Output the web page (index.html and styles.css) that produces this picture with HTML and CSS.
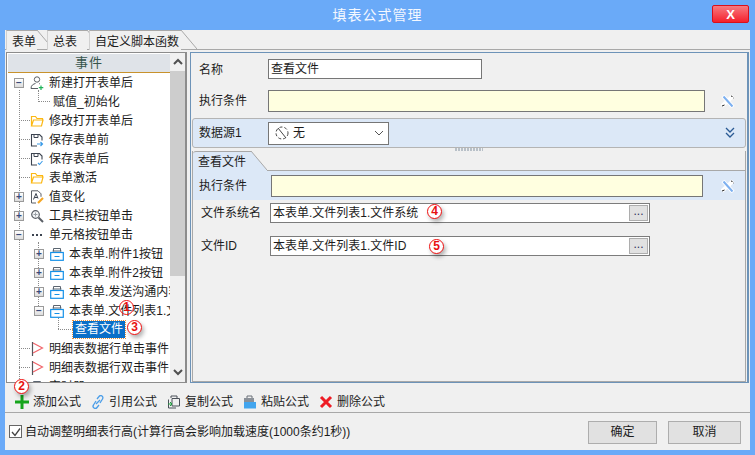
FILE: index.html
```html
<!DOCTYPE html>
<html lang="zh">
<head>
<meta charset="utf-8">
<title>填表公式管理</title>
<link rel="stylesheet" href="styles.css">
</head>
<body>
<svg class="defs" width="0" height="0">
  <symbol id="i-user" viewBox="0 0 14 14"><circle cx="7" cy="3.5" r="2.7" fill="none" stroke="#5a5f66"/><path d="M1 12.5c0-3.5 2.5-4.5 4.5-5M9 7.5l.8.4M1 12.5h7" fill="none" stroke="#5a5f66"/><path d="M11 9.5v4.500M8.800 11.700h4.500" stroke="#1fb35a" stroke-width="1.200"/></symbol>
  <symbol id="i-folder" viewBox="0 0 14 14"><path d="M1.500 12V2.500h4l1.500 2h5.500V6M1.500 12h10L13 6H3.500L1.500 12z" fill="none" stroke="#fcb813" stroke-width="1.200"/></symbol>
  <symbol id="i-save" viewBox="0 0 14 14"><path d="M7 13H1.500V1.500h8l2.500 2.500v3.500" fill="none" stroke="#3c4450" stroke-width="1.100"/><path d="M4 1.500v3h4v-3" fill="none" stroke="#3c4450"/><path d="M7 11h5M10.500 9l2 2-2 2" fill="none" stroke="#3a9be8" stroke-width="1.200"/></symbol>
  <symbol id="i-savec" viewBox="0 0 14 14"><path d="M7 13H1.500V1.500h8l2.500 2.500v3.500" fill="none" stroke="#3c4450" stroke-width="1.100"/><path d="M4 1.500v3h4v-3" fill="none" stroke="#3c4450"/><path d="M8 11l1.500 1.500 3-3.500" fill="none" stroke="#3a9be8" stroke-width="1.100"/></symbol>
  <symbol id="i-doc" viewBox="0 0 14 14"><path d="M6 13H1.500V.8h6.500l3 3v3" fill="none" stroke="#5a5f66"/><path d="M3.500 9.500L6 3.500l2 5M4.500 7.500h3" fill="none" stroke="#3c4450"/><path d="M8 13l5-5" stroke="#f5a623" stroke-width="2.200"/></symbol>
  <symbol id="i-search" viewBox="0 0 14 14"><circle cx="5.500" cy="5.500" r="3.800" fill="#f4f6f8" stroke="#5a5f66" stroke-width="1.200"/><path d="M3.500 5.500h4M5.500 3.500v4" stroke="#9aa0a6"/><path d="M8.500 8.500l4.500 4.500" stroke="#5a5f66" stroke-width="2"/></symbol>
  <symbol id="i-dots" viewBox="0 0 14 14"><path d="M2 7h2M6 7h2M10 7h2" stroke="#3c4450" stroke-width="2"/></symbol>
  <symbol id="i-tray" viewBox="0 0 14 14"><path d="M3.500 4.500V1.500h7v3" fill="none" stroke="#5b6570"/><path d="M2.500 4h9" stroke="#5b6570"/><rect x=".7" y="5.500" width="12.600" height="7.800" fill="none" stroke="#1591e8" stroke-width="1.200"/><path d="M4.500 9.500h5" stroke="#1591e8"/></symbol>
  <symbol id="i-flag" viewBox="0 0 14 14"><path d="M2.500 0v14" stroke="#53565c" stroke-width="1.200"/><path d="M3 1l9.500 5L3 11" fill="none" stroke="#f0646a" stroke-width="1.200"/></symbol>
  <symbol id="i-wand" viewBox="0 0 14 14"><path d="M1 12L12 2" stroke="#fff" stroke-width="4"/><path d="M2 2l10 11" stroke="#fff" stroke-width="4"/><path d="M2.500 2.500l9 10" stroke="#7db0f0" stroke-width="2"/><path d="M1 12l2.500-1M10 2l1.500 .5M12.500 4h.5" stroke="#222" stroke-width="1"/></symbol>
</svg>

<div class="window">
  <header class="titlebar">
    <span class="title">填表公式管理</span>
    <button class="close">X</button>
  </header>

  <div class="content">
    <nav class="tabs">
      <div class="tab t1"><span class="tab-text">表单</span><svg class="slant" width="16" height="20"><path d="M0 0l16 19" fill="none" stroke="#a8a8a8"/></svg></div>
      <div class="tab t2"><span class="tab-text">总表</span><svg class="slant" width="16" height="20"><path d="M0 0l16 19" fill="none" stroke="#a8a8a8"/></svg></div>
      <div class="tab t3"><span class="tab-text">自定义脚本函数</span><svg class="slant" width="16" height="20"><path d="M0 0l16 19" fill="none" stroke="#a8a8a8"/></svg></div>
    </nav>

    <main class="main">
      <section class="left">
        <div class="tree">
          <div class="tree-head">事件</div>
          <span class="vline v1"></span>
          <span class="vline v2"></span>
          <span class="vline v3"></span>
          <span class="vline v4"></span>
          <div class="row l1"><span class="exp">−</span><svg class="ic"><use href="#i-user"/></svg><span>新建打开表单后</span></div>
          <div class="row l2leaf"><span class="conn"></span><span>赋值_初始化</span></div>
          <div class="row l1"><span class="conn"></span><svg class="ic"><use href="#i-folder"/></svg><span>修改打开表单后</span></div>
          <div class="row l1"><span class="conn"></span><svg class="ic"><use href="#i-save"/></svg><span>保存表单前</span></div>
          <div class="row l1"><span class="conn"></span><svg class="ic"><use href="#i-savec"/></svg><span>保存表单后</span></div>
          <div class="row l1"><span class="conn"></span><svg class="ic"><use href="#i-folder"/></svg><span>表单激活</span></div>
          <div class="row l1"><span class="exp">+</span><svg class="ic"><use href="#i-doc"/></svg><span>值变化</span></div>
          <div class="row l1"><span class="exp">+</span><svg class="ic"><use href="#i-search"/></svg><span>工具栏按钮单击</span></div>
          <div class="row l1"><span class="exp">−</span><svg class="ic"><use href="#i-dots"/></svg><span>单元格按钮单击</span></div>
          <div class="row l2"><span class="exp">+</span><svg class="ic"><use href="#i-tray"/></svg><span>本表单.附件1按钮</span></div>
          <div class="row l2"><span class="exp">+</span><svg class="ic"><use href="#i-tray"/></svg><span>本表单.附件2按钮</span></div>
          <div class="row l2"><span class="exp">+</span><svg class="ic"><use href="#i-tray"/></svg><span>本表单.发送沟通内容按钮</span></div>
          <div class="row l2"><span class="exp">−</span><svg class="ic"><use href="#i-tray"/></svg><span>本表单.文件列表1.文件按钮</span></div>
          <div class="row l3"><span class="conn"></span><span class="selected">查看文件</span></div>
          <div class="row l1"><span class="conn"></span><svg class="ic"><use href="#i-flag"/></svg><span>明细表数据行单击事件</span></div>
          <div class="row l1"><span class="conn"></span><svg class="ic"><use href="#i-flag"/></svg><span>明细表数据行双击事件</span></div>
          <div class="row l1"><span class="conn"></span><svg class="ic"><use href="#i-tray"/></svg><span>定时器</span></div>
        </div>
        <div class="scrollbar">
          <svg class="sb-arrow" width="16" height="18"><path d="M4 11l4-4 4 4" fill="none" stroke="#505050" stroke-width="2"/></svg>
          <div class="sb-thumb"></div>
          <svg class="sb-arrow sb-end" width="16" height="18"><path d="M4 7l4 4 4-4" fill="none" stroke="#505050" stroke-width="2"/></svg>
        </div>
      </section>

      <section class="right">
        <div class="form-row first">
          <span class="lbl">名称</span>
          <div class="field name-field">查看文件</div>
        </div>
        <div class="form-row second">
          <span class="lbl">执行条件</span>
          <div class="field yellow cond-field"></div>
          <svg class="wand"><use href="#i-wand"/></svg>
        </div>
        <div class="band">
          <span class="lbl">数据源1</span>
          <div class="select">
            <svg class="no-ic" width="16" height="16"><circle cx="8" cy="8" r="6" fill="none" stroke="#444" stroke-dasharray="3 2"/><path d="M4 3l8 10" stroke="#444"/></svg>
            <span>无</span>
            <svg class="caret" width="10" height="6"><path d="M1 1l4 4 4-4" fill="none" stroke="#555"/></svg>
          </div>
          <svg class="chev" width="12" height="14"><path d="M2 2l4 4 4-4M2 7l4 4 4-4" fill="none" stroke="#2a5a94" stroke-width="1.300"/></svg>
        </div>
        <div class="handle"></div>
        <div class="sub">
          <div class="sub-tabs">
            <div class="sub-tab">查看文件</div>
            <svg class="sub-slant" width="16" height="20"><path d="M0 0L16 19V20H0z" fill="#dce8f7"/><path d="M0 0l16 19" fill="none" stroke="#a8a8a8"/></svg>
            <div class="sub-line"></div>
          </div>
          <div class="sub-band">
            <span class="lbl lbl-wide">执行条件</span>
            <div class="field yellow sub-cond"></div>
            <svg class="wand wand-sub"><use href="#i-wand"/></svg>
          </div>
          <div class="file-row top">
            <span class="lbl">文件系统名</span>
            <div class="field file-field"><span class="file-text">本表单.文件列表1.文件系统</span><span class="more">...</span></div>
          </div>
          <div class="file-row next">
            <span class="lbl">文件ID</span>
            <div class="field file-field"><span class="file-text">本表单.文件列表1.文件ID</span><span class="more">...</span></div>
          </div>
        </div>
      </section>
    </main>

    <div class="toolbar">
      <div class="tool"><svg class="tool-ic" viewBox="0 0 14 14"><path d="M7 0v14M0 7h14" stroke="#16a51c" stroke-width="3"/></svg><span>添加公式</span></div>
      <div class="tool"><svg class="tool-ic" viewBox="0 0 14 14"><path d="M6 4l2-2.500a2 2 0 0 1 3.500 2.500L9 8M8 10l-2 2.500a2 2 0 0 1-3.500-2.500L5 6M5 9l4-4" fill="none" stroke="#4a9de8" stroke-width="1.300"/></svg><span>引用公式</span></div>
      <div class="tool"><svg class="tool-ic" viewBox="0 0 14 14"><path d="M4 3V1h6v2M1.500 4.500V13H9M5 3.500h7.500V11H5z" fill="none" stroke="#4a5058"/><path d="M1 9h4M3 7l2 2-2 2" fill="none" stroke="#1c9c3c"/></svg><span>复制公式</span></div>
      <div class="tool"><svg class="tool-ic" viewBox="0 0 14 14"><path d="M4 3V1h5v2" fill="none" stroke="#6a7078"/><rect x="1" y="3" width="10" height="4" fill="#8a9098"/><rect x="1" y="7" width="12" height="6.500" fill="#42a5ee"/></svg><span>粘贴公式</span></div>
      <div class="tool"><svg class="tool-ic" viewBox="0 0 14 14"><path d="M2 2l10 10M12 2L2 12" stroke="#ee1c25" stroke-width="3"/></svg><span>删除公式</span></div>
    </div>

    <footer class="footer">
      <span class="check"><svg width="12" height="12"><path d="M2 6l3 3.500 5-7" fill="none" stroke="#444" stroke-width="1.300"/></svg></span>
      <span class="check-text">自动调整明细表行高(计算行高会影响加载速度(1000条约1秒))</span>
      <button class="btn ok">确定</button>
      <button class="btn cancel">取消</button>
    </footer>

    <span class="mark m1">1</span>
    <span class="mark m2">2</span>
    <span class="mark m3">3</span>
    <span class="mark m4">4</span>
    <span class="mark m5">5</span>
  </div>
</div>
</body>
</html>
```

FILE: styles.css
```css
* { box-sizing: border-box; }
html, body { margin: 0; padding: 0; }
body {
  width: 755px;
  height: 455px;
  overflow: hidden;
  font: 12px/16px "Liberation Sans", "Noto Sans CJK SC", sans-serif;
  color: #1c1c1c;
}
.defs { position: absolute; }

.window {
  position: relative;
  width: 755px;
  height: 455px;
  background: #6aaaf8;
  padding: 0 5px 5px;
  display: flex;
  flex-direction: column;
}
.titlebar {
  height: 30px;
  flex: none;
  display: flex;
  align-items: flex-start;
  justify-content: center;
}
.title {
  margin: 6px 0 0 0;
  color: #f4f8ff;
  font-size: 14px;
  line-height: 18px;
  letter-spacing: 1px;
}
.close {
  position: absolute;
  left: 712px;
  top: 5px;
  width: 37px;
  height: 18px;
  padding: 0;
  border: 1px solid #d8101c;
  border-radius: 2px;
  background: linear-gradient(#f77a80, #f5202c);
  color: #fff;
  font: bold 13px/15px "Liberation Sans", sans-serif;
}

.content {
  position: relative;
  flex: 1;
  min-height: 0;
  background: #f0f0f0;
  display: flex;
  flex-direction: column;
}

.tabs {
  height: 20px;
  flex: none;
  display: flex;
  padding-left: 1px;
  border-bottom: 1px solid #a8a8a8;
}
.tab {
  display: flex;
  height: 20px;
}
.t1 { margin-right: -6px; }
.t2 { margin-right: -14px; }
.tab-text {
  padding: 3px 2px 0 4px;
  height: 20px;
  border-top: 1px solid #a8a8a8;
  border-left: 1px solid #d0d0d0;
  background: #f0f0f0;
}
.t1 .tab-text { padding-left: 5px; padding-right: 1px; }
.t2 .tab-text { padding-left: 5px; padding-right: 10px; }
.t3 .tab-text { padding-left: 5px; }
.slant { flex: none; }

.main {
  height: 333px;
  flex: none;
  display: flex;
  gap: 3px;
  padding: 2px 1px 0;
}
.left {
  width: 181px;
  height: 331px;
  flex: none;
  display: flex;
  border: 2px solid #8c8c8c;
  border-width: 1px 2px 1px 1px;
  background: #fff;
  overflow: hidden;
}
.tree {
  position: relative;
  width: 163px;
  flex: none;
  padding-left: 1px;
  overflow: hidden;
}
.tree-head {
  height: 19px;
  margin: 1px 0 0;
  background: #dfe3e8;
  border-bottom: 1px solid #c8922c;
  color: #37544c;
  font-size: 13px;
  line-height: 18px;
  text-align: center;
  letter-spacing: 1px;
}
.row {
  height: 19px;
  display: flex;
  align-items: center;
  white-space: nowrap;
  flex-wrap: nowrap;
  position: relative;
}
.l1 { padding-left: 6px; }
.l2 { padding-left: 26px; }
.l2leaf { padding-left: 25px; }
.l3 { padding-left: 50px; }
.exp {
  width: 10px;
  height: 10px;
  flex: none;
  margin-right: 6px;
  border: 1px solid #9a9a9a;
  background: linear-gradient(#fff, #dcdcdc);
  color: #3a4a7a;
  font: bold 10px/7px "Liberation Sans", sans-serif;
  text-align: center;
  overflow: hidden;
}
.conn {
  width: 11px;
  height: 0;
  flex: none;
  margin-left: 5px;
  border-top: 1px dotted #8a8a8a;
}
.l2leaf .conn { width: 12px; margin-right: 3px; }
.l3 .conn { width: 15px; margin-left: 0; }
.ic { width: 14px; height: 14px; flex: none; margin-right: 5px; }
.selected {
  background: #0a6fc8;
  color: #fff;
  outline: 1px dotted #e8923c;
  padding: 0 2px;
  height: 17px;
  line-height: 16px;
}
.vline {
  position: absolute;
  width: 0;
  border-left: 1px dotted #8a8a8a;
}
.v1 { left: 12px; top: 37px; height: 293px; }
.v2 { left: 31px; top: 37px; height: 12px; }
.v3 { left: 31px; top: 189px; height: 68px; }
.v4 { left: 51px; top: 265px; height: 11px; }

.scrollbar {
  width: 15px;
  flex: none;
  background: #f0f0f0;
  display: flex;
  flex-direction: column;
}
.sb-arrow { flex: none; }
.sb-thumb { height: 205px; background: #cdcdcd; }
.sb-end { margin-top: auto; margin-bottom: 1px; }

.right {
  width: 559px;
  height: 331px;
  flex: none;
  display: flex;
  flex-direction: column;
  border: 1px solid #6d93b8;
  border-right-width: 2px;
}
.lbl { flex: none; width: 69px; }
.lbl-wide { width: 72px; }
.first .lbl { padding-top: 2px; }
.field {
  flex: none;
  border: 1px solid #767676;
  background: #fff;
  height: 20px;
  padding: 1px 2px;
  line-height: 17px;
  white-space: nowrap;
}
.yellow { background: #ffffe0; }
.form-row {
  display: flex;
  align-items: center;
  padding-left: 8px;
}
.first { margin-top: 6px; }
.second { margin-top: 11px; }
.name-field { width: 214px; }
.cond-field { width: 437px; height: 22px; }
.wand { width: 14px; height: 14px; margin-left: 16px; flex: none; }
.band {
  margin: 6px 1px 0;
  height: 30px;
  flex: none;
  display: flex;
  align-items: center;
  padding-left: 6px;
  border: 1px solid #b4b4b4;
  border-radius: 3px;
  background: #dce8f7;
}
.select {
  width: 121px;
  height: 23px;
  flex: none;
  display: flex;
  align-items: center;
  border: 1px solid #767676;
  background: #fff;
  padding-left: 5px;
}
.no-ic { margin-right: 3px; flex: none; }
.caret { margin-left: auto; margin-right: 4px; }
.chev { margin-left: auto; margin-right: 9px; }
.handle {
  height: 3px;
  flex: none;
  margin: 0 auto;
  width: 28px;
  background: repeating-linear-gradient(90deg, #b8c0c8 0 2px, transparent 2px 3px);
}
.sub {
  flex: 1;
  min-height: 0;
  margin: 0 1px;
  border: 1px solid #a8a8a8;
  border-top: 0;
}
.sub-tabs {
  display: flex;
  height: 20px;
}
.sub-tab {
  width: 58px;
  flex: none;
  height: 20px;
  padding: 2px 0 0 5px;
  background: #dce8f7;
  border-top: 1px solid #a8a8a8;
  border-radius: 3px 0 0 0;
}
.sub-slant { flex: none; }
.sub-line { flex: 1; border-bottom: 1px solid #a8a8a8; height: 20px; }
.sub-band {
  height: 29px;
  display: flex;
  align-items: center;
  padding-left: 6px;
  background: #dce8f7;
}
.sub-cond { width: 432px; height: 22px; }
.wand-sub { margin-left: 18px; }
.file-row {
  display: flex;
  align-items: center;
  padding-left: 8px;
}
.top { margin-top: 3px; }
.next { margin-top: 13px; }
.file-field {
  width: 380px;
  display: flex;
  align-items: center;
  padding: 0 1px 0 2px;
  border-color: #7c7c7c;
}
.file-text { flex: 1; }
.more {
  width: 19px;
  height: 16px;
  flex: none;
  background: #e1e1e1;
  border: 1px solid #adadad;
  color: #30305a;
  font-size: 12px;
  line-height: 11px;
  text-align: center;
}

.toolbar {
  height: 30px;
  flex: none;
  display: flex;
  align-items: center;
  padding: 8px 0 0 10px;
  gap: 10px;
  border-bottom: 1px solid #a8a8a8;
}
.tool {
  display: flex;
  align-items: center;
  gap: 4px;
}
.tool-ic { width: 14px; height: 14px; flex: none; }

.footer {
  flex: 1;
  min-height: 0;
  display: flex;
  align-items: center;
  padding-left: 4px;
}
.check {
  width: 13px;
  height: 13px;
  flex: none;
  border: 1px solid #666;
  background: #fff;
  margin: 0 3px 0 0;
}
.check svg { display: block; }
.check-text { white-space: nowrap; }
.btn {
  height: 23px;
  flex: none;
  padding: 0;
  border: 1px solid #adadad;
  background: #e1e1e1;
  color: #1c1c1c;
  font: inherit;
  margin-top: 1px;
}
.ok { width: 69px; margin-left: auto; }
.cancel { width: 73px; margin: 1px 9px 0 11px; }

.mark {
  position: absolute;
  width: 15px;
  height: 15px;
  border: 1px solid #f01010;
  border-radius: 50%;
  background: #fff;
  color: #e81010;
  font: bold 12px/13px "Liberation Sans", sans-serif;
  text-align: center;
  box-shadow: 2px 3px 4px rgba(0, 0, 0, .3);
}
.m1 { left: 114px; top: 270px; background: transparent; box-shadow: none; }
.m2 { left: 9px; top: 349px; }
.m3 { left: 122px; top: 290px; }
.m4 { left: 422px; top: 174px; }
.m5 { left: 424px; top: 209px; }
```
